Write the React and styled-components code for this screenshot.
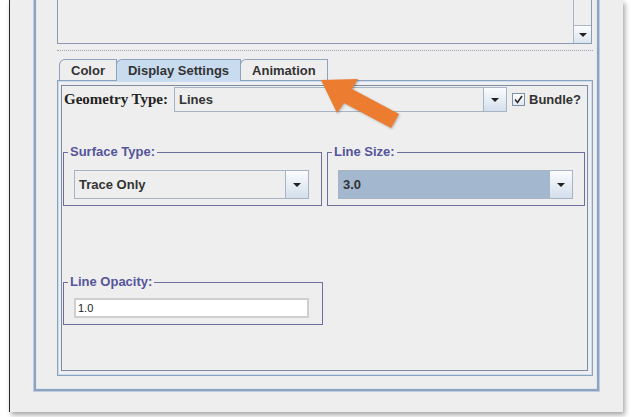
import styled, { createGlobalStyle } from "styled-components";

const Global = createGlobalStyle`
  html, body { margin: 0; padding: 0; background: #ffffff; overflow: hidden; }
  body { font-family: "Liberation Sans", Arial, sans-serif; }
`;

const Page = styled.div`
  width: 631px;
  height: 417px;
  padding-left: 9px;
  box-sizing: border-box;
`;

const Window = styled.div`
  position: relative;
  width: 614px;
  height: 412px;
  box-sizing: border-box;
  background: #eeeeee;
  border-left: 1px solid #2a2a2a;
  box-shadow: 2px 3px 5px rgba(0, 0, 0, 0.35);
  padding: 0 23px 20px 23px;
`;

const OuterFrame = styled.div`
  height: 392px;
  box-sizing: border-box;
  border: 1px solid #bccbdd;
  border-top: none;
  box-shadow: inset 2px -2px 0 0 #8ea3bf, inset -2px 0 0 0 #8ea3bf, inset 3px -3px 0 0 #dde6f0, inset -3px 0 0 0 #dde6f0;
  padding: 0 6px 15px 23px;
  display: flex;
  flex-direction: column;
`;

const TextArea = styled.div`
  height: 44px;
  box-sizing: border-box;
  border: 1px solid #8b9bb1;
  border-top: none;
  display: flex;
  justify-content: flex-end;
  margin-right: 1px;
`;

const ScrollBar = styled.div`
  width: 17px;
  border-left: 1px solid #a9b6c6;
  display: flex;
  flex-direction: column;
  justify-content: flex-end;
`;

const ScrollButton = styled.div`
  height: 17px;
  border-top: 1px solid #a9b6c6;
  background: linear-gradient(#fbfcfe, #dbe4ee);
  display: flex;
  align-items: center;
  justify-content: center;
`;

const Arrow = styled.span`
  width: 0;
  height: 0;
  border-left: 4px solid transparent;
  border-right: 4px solid transparent;
  border-top: 4px solid #222;
`;

const Divider = styled.div`
  height: 12px;
  display: flex;
  align-items: center;
  &::before {
    content: "";
    flex: 1;
    border-top: 1px dotted #9aa4b0;
  }
`;

const TabPane = styled.div`
  flex: 1;
  display: flex;
  flex-direction: column;
`;

const TabRow = styled.div`
  height: 24px;
  display: flex;
  align-items: flex-end;
  padding-left: 3px;
`;

const Tab = styled.div`
  height: ${(p) => (p.$active ? 22 : 21)}px;
  box-sizing: border-box;
  padding: 0 ${(p) => p.$pad}px;
  border: 1px solid #8fa2bb;
  border-bottom: none;
  border-top-left-radius: 6px;
  margin-left: -1px;
  background: ${(p) => (p.$active ? "#c8dbef" : "#eeeeee")};
  font-size: 13px;
  font-weight: bold;
  color: #333333;
  display: flex;
  align-items: center;
  position: relative;
  z-index: ${(p) => (p.$active ? 1 : 0)};
  margin-bottom: ${(p) => (p.$active ? -1 : 0)}px;
`;

const TabContent = styled.div`
  flex: 1;
  border: 1px solid #8fa2bb;
  box-shadow: inset 0 0 0 1px #c8dbef, inset 0 0 0 2px #eef2f7;
  padding: 4px 4px 4px 3px;
  display: flex;
`;

const InnerPanel = styled.div`
  flex: 1;
  border: 1px solid #7c8ca4;
  padding: 1px 1px 0 1px;
  display: flex;
  flex-direction: column;
`;

const GeoRow = styled.div`
  height: 25px;
  display: flex;
  align-items: center;
`;

const SerifLabel = styled.span`
  width: 111px;
  padding-left: 1px;
  box-sizing: border-box;
  font-family: "Liberation Serif", "Times New Roman", serif;
  font-weight: bold;
  font-size: 15px;
  color: #222222;
`;

const Combo = styled.div`
  width: ${(p) => p.$w}px;
  height: ${(p) => p.$h}px;
  box-sizing: border-box;
  border: 1px solid #a7b4c4;
  background: ${(p) => p.$bg || "#eeeeee"};
  display: flex;
`;

const ComboText = styled.div`
  flex: 1;
  padding-left: 4px;
  display: flex;
  align-items: center;
  font-size: 13px;
  font-weight: bold;
  color: #333333;
`;

const ComboButton = styled.div`
  width: 22px;
  border-left: 1px solid #a7b4c4;
  background: linear-gradient(#fbfcfe, #d3dfec);
  display: flex;
  align-items: center;
  justify-content: center;
`;

const Check = styled.div`
  width: 13px;
  height: 13px;
  box-sizing: border-box;
  margin-left: 5px;
  border: 1px solid #7e90a8;
  background: linear-gradient(#ffffff, #e2e9f1);
  display: flex;
  align-items: center;
  justify-content: center;
`;

const CheckLabel = styled.span`
  margin-left: 4px;
  font-size: 13px;
  font-weight: bold;
  color: #333333;
`;

const Row = styled.div`
  display: flex;
  gap: 5px;
  margin-top: ${(p) => p.$mt}px;
`;

const Titled = styled.fieldset`
  width: ${(p) => p.$w}px;
  box-sizing: border-box;
  margin: 0;
  border: 1px solid #6e6e9c;
  padding: ${(p) => p.$pt}px 11px 6px 10px;
  min-width: 0;
`;

const Title = styled.legend`
  margin-left: -6px;
  padding: 0 2px;
  font-size: 13px;
  line-height: 14px;
  font-weight: bold;
  color: #55559b;
`;

const TextField = styled.div`
  width: 235px;
  height: 20px;
  box-sizing: border-box;
  border: 2px solid #cfcfcf;
  background: #ffffff;
  padding-left: 2px;
  font-size: 11px;
  color: #222222;
  display: flex;
  align-items: center;
`;

const Pointer = styled.svg`
  position: absolute;
  left: -9px;
  top: 0;
  pointer-events: none;
  filter: drop-shadow(1px 1px 1px rgba(0, 0, 0, 0.25));
`;

const ComboBox = ({ w, h, bg, text }) => (
  <Combo $w={w} $h={h} $bg={bg}>
    <ComboText>{text}</ComboText>
    <ComboButton>
      <Arrow />
    </ComboButton>
  </Combo>
);

export default function App() {
  return (
    <Page>
      <Global />
      <Window>
        <OuterFrame>
          <TextArea>
            <ScrollBar>
              <ScrollButton>
                <Arrow />
              </ScrollButton>
            </ScrollBar>
          </TextArea>
          <Divider />
          <TabPane>
            <TabRow>
              <Tab $pad={11}>Color</Tab>
              <Tab $pad={11} $active>Display Settings</Tab>
              <Tab $pad={11}>Animation</Tab>
            </TabRow>
            <TabContent>
              <InnerPanel>
                <GeoRow>
                  <SerifLabel>Geometry Type:</SerifLabel>
                  <ComboBox w={333} h={25} text="Lines" />
                  <Check>
                    <svg width="9" height="9" viewBox="0 0 9 9">
                      <path d="M1 4.5 L3.5 7.5 L8 1" fill="none" stroke="#2b2b2b" strokeWidth="1.6" />
                    </svg>
                  </Check>
                  <CheckLabel>Bundle?</CheckLabel>
                </GeoRow>
                <Row $mt={33}>
                  <Titled $w={259} $pt={11}>
                    <Title>Surface Type:</Title>
                    <ComboBox w={235} h={29} text="Trace Only" />
                  </Titled>
                  <Titled $w={258} $pt={11}>
                    <Title>Line Size:</Title>
                    <ComboBox w={235} h={29} bg="#a3b8ce" text="3.0" />
                  </Titled>
                </Row>
                <Row $mt={69}>
                  <Titled $w={260} $pt={9}>
                    <Title>Line Opacity:</Title>
                    <TextField>1.0</TextField>
                  </Titled>
                </Row>
              </InnerPanel>
            </TabContent>
          </TabPane>
        </OuterFrame>
        <Pointer width="631" height="417" viewBox="0 0 631 417">
          <polygon
            points="320,80 357,79 351,89 398,114 390,128 343,103 336,113"
            fill="#ec7c30"
          />
        </Pointer>
      </Window>
    </Page>
  );
}
